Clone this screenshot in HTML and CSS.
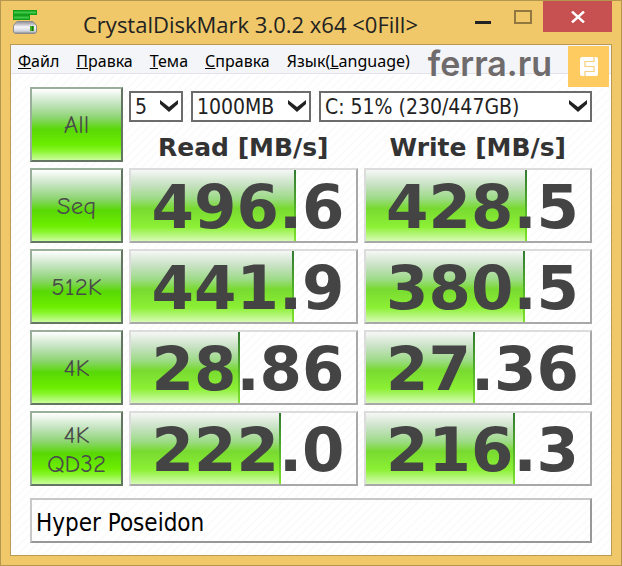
FILE: index.html
```html
<!DOCTYPE html>
<html lang="ru">
<head>
    <meta charset="UTF-8">
    <meta name="viewport" content="width=device-width, initial-scale=1.0">
    <title>CrystalDiskMark 3.0.2 x64 &lt;0Fill&gt;</title>
    <link rel="stylesheet" href="styles.css">
</head>
<body>
    <div class="window">
        <header class="titlebar">
            <svg class="app-icon" width="26" height="26" viewBox="0 0 26 26" aria-hidden="true">
                <defs>
                    <linearGradient id="disk" x1="0" y1="0" x2="0" y2="1">
                        <stop offset="0" stop-color="#8f8f94"/>
                        <stop offset="0.25" stop-color="#c4c4ca"/>
                        <stop offset="0.45" stop-color="#f6f6fa"/>
                        <stop offset="0.8" stop-color="#d4d4de"/>
                        <stop offset="1" stop-color="#85858c"/>
                    </linearGradient>
                </defs>
                <path d="M1 1h24v5h-7v5H1z" fill="#12a01c"/>
                <path d="M2 3.5h22M2 8.5h15" stroke="#3fc848" stroke-width="2"/>
                <path d="M5 12.500h16l3.500 4v6.500l-1.500 1.500H3L1.500 23v-6.500z" fill="url(#disk)" stroke="#8b8b90" stroke-linejoin="round"/>
                <rect x="18" y="17" width="4" height="5" fill="#3faf25"/>
                <path d="M20.500 17v5" stroke="#1d6f1a"/>
            </svg>
            <h1 class="title">CrystalDiskMark 3.0.2 x64 &lt;0Fill&gt;</h1>
            <div class="controls">
                <button class="control" aria-label="Свернуть">
                    <svg width="16" height="32" viewBox="0 0 16 32"><path d="M0 20h16v3H0z" fill="#222"/></svg>
                </button>
                <button class="control" aria-label="Развернуть">
                    <svg width="18" height="32" viewBox="0 0 18 32"><path d="M1 10h16v12H1z" fill="none" stroke="#917840" stroke-width="2"/></svg>
                </button>
                <button class="control close" aria-label="Закрыть">
                    <svg width="14" height="12" viewBox="0 0 14 12"><path d="M1 0.5l12 11M13 0.5l-12 11" stroke="#fff" stroke-width="2.4"/></svg>
                </button>
            </div>
        </header>

        <main class="client">
            <nav class="menu">
                <a href="#"><u>Ф</u>айл</a>
                <a href="#"><u>П</u>равка</a>
                <a href="#"><u>Т</u>ема</a>
                <a href="#"><u>С</u>правка</a>
                <a href="#">Язык(<u>L</u>anguage)</a>
            </nav>

            <!-- Site watermark, lies over the menu -->
            <div class="watermark">
                <span class="wordmark">ferra.ru</span>
                <svg class="badge" width="41" height="41" viewBox="0 0 41 41" aria-hidden="true">
                    <rect width="41" height="41" fill="#fdcb60"/>
                    <rect x="12" y="11" width="18" height="19" rx="2" fill="#fff"/>
                    <path d="M26 11v4.500H17v5h9v5H17V30" fill="none" stroke="#f6cf7c" stroke-width="1.200"/>
                </svg>
            </div>

            <div class="content">
                <table class="results">
                    <colgroup>
                        <col class="col-test">
                        <col>
                        <col>
                    </colgroup>
                    <tr class="options-row">
                        <td rowspan="2"><button class="test">All</button></td>
                        <td colspan="2">
                            <div class="options">
                                <div class="select count">
                                    <select aria-label="Count"><option>5</option></select>
                                    <svg width="18" height="12" viewBox="0 0 18 12"><path d="M0 0l9 7 9-7v4l-9 8-9-8z"/></svg>
                                </div>
                                <div class="select size">
                                    <select aria-label="Size"><option>1000MB</option></select>
                                    <svg width="18" height="12" viewBox="0 0 18 12"><path d="M0 0l9 7 9-7v4l-9 8-9-8z"/></svg>
                                </div>
                                <div class="select drive">
                                    <select aria-label="Drive"><option>C: 51% (230/447GB)</option></select>
                                    <svg width="18" height="12" viewBox="0 0 18 12"><path d="M0 0l9 7 9-7v4l-9 8-9-8z"/></svg>
                                </div>
                            </div>
                        </td>
                    </tr>
                    <tr class="head-row">
                        <th>Read [MB/s]</th>
                        <th>Write [MB/s]</th>
                    </tr>
                    <tr>
                        <td><button class="test">Seq</button></td>
                        <td><div class="score"><div class="fill" style="width: 73.7%"></div><span>496.6</span></div></td>
                        <td><div class="score"><div class="fill" style="width: 71.9%"></div><span>428.5</span></div></td>
                    </tr>
                    <tr>
                        <td><button class="test">512K</button></td>
                        <td><div class="score"><div class="fill" style="width: 72.8%"></div><span>441.9</span></div></td>
                        <td><div class="score"><div class="fill" style="width: 71.2%"></div><span>380.5</span></div></td>
                    </tr>
                    <tr>
                        <td><button class="test">4K</button></td>
                        <td><div class="score"><div class="fill" style="width: 48.7%"></div><span>28.86</span></div></td>
                        <td><div class="score"><div class="fill" style="width: 48.7%"></div><span>27.36</span></div></td>
                    </tr>
                    <tr>
                        <td><button class="test">4K<br>QD32</button></td>
                        <td><div class="score"><div class="fill" style="width: 67%"></div><span>222.0</span></div></td>
                        <td><div class="score"><div class="fill" style="width: 66.5%"></div><span>216.3</span></div></td>
                    </tr>
                </table>
                <input class="comment" type="text" value="Hyper Poseidon" aria-label="Comment">
            </div>
        </main>
    </div>
</body>
</html>
```

FILE: styles.css
```css
* {
    box-sizing: border-box;
}
body {
    margin: 0;
    font-family: "Noto Sans", "Open Sans", sans-serif;
    color: #000;
}
button, select, input {
    font-family: inherit;
    margin: 0;
}
.window {
    min-height: 100vh;
    display: flex;
    flex-direction: column;
    padding: 0 9px 9px;
    background-color: #f0c869;
    border: 1px solid #b5964f;
}

/* Title bar */
.titlebar {
    display: flex;
    height: 43px;
}
.app-icon {
    margin: 8px 0 0 2px;
}
.title {
    flex: 1;
    margin: 0;
    padding-top: 6px;
    font-family: "Open Sans", sans-serif;
    font-size: 22px;
    line-height: 34px;
    font-weight: 400;
    text-align: center;
    white-space: nowrap;
    color: #222;
}
.controls {
    display: flex;
    align-items: flex-start;
}
.control {
    display: flex;
    align-items: center;
    justify-content: center;
    width: 40px;
    height: 31px;
    padding: 0;
    border: none;
    background: none;
}
.close {
    width: 69px;
    background-color: #c75050;
}

/* Client area */
.client {
    position: relative;
    flex: 1;
    border: 1px solid #b99a50;
    background: repeating-linear-gradient(135deg, #fff 0, #fff 4px, #fbfbfb 4px, #fbfbfb 6px);
}
.menu {
    display: flex;
    gap: 17px;
    height: 29px;
    padding-left: 7px;
    font-size: 16px;
    line-height: 32px;
    background-color: #f4f5f8;
    border-bottom: 1px solid #e3e4e8;
}
.menu a {
    color: #000;
    text-decoration: none;
}
.watermark {
    position: absolute;
    top: 1px;
    right: 2px;
    display: flex;
    gap: 16px;
}
.wordmark {
    font-family: Inter, sans-serif;
    font-size: 34px;
    line-height: 36px;
    font-weight: 600;
    color: #6f6b6c;
}
.content {
    padding: 7px 13px 12px;
}

/* Results */
.results {
    width: 100%;
    table-layout: fixed;
    border-collapse: separate;
    border-spacing: 6px;
}
.results td, .results th {
    padding: 0;
    vertical-align: bottom;
}
.col-test {
    width: 93px;
}
.options-row {
    height: 35px;
}
.head-row {
    height: 34px;
}
.results th {
    font-family: "DejaVu Sans", sans-serif;
    font-size: 25px;
    line-height: 28px;
    color: #333;
}
.test {
    display: block;
    width: 100%;
    height: 75px;
    padding: 0;
    border: 2px solid;
    border-color: #9aaf9a #627662 #627662 #9aaf9a;
    background: linear-gradient(#fff 0%, #c6e4c2 20%, #8ed573 40%, #58d805 57%, #6ced00 78%, #85f526 86%, #c9fd9c 100%);
    font-family: "Comic Sans MS", "Comic Neue", Lato, sans-serif;
    font-size: 25px;
    line-height: 29px;
    color: #4a4a4a;
}
.options {
    display: flex;
    gap: 8px;
}
.select {
    display: grid;
    align-items: center;
}
.select > * {
    grid-area: 1 / 1;
}
.select select {
    width: 100%;
    height: 31px;
    padding: 0 4px;
    appearance: none;
    border: 2px solid #6c6c6c;
    border-radius: 0;
    background-color: #fff;
    font-family: "DejaVu Sans Condensed", sans-serif;
    font-size: 21px;
    color: #222;
}
.select svg {
    justify-self: end;
    margin: 0 5px 2px 0;
    fill: #222;
    pointer-events: none;
}
.count {
    width: 54px;
}
.size {
    width: 120px;
}
.drive {
    flex: 1;
}
.score {
    display: grid;
    height: 75px;
    border: 2px solid;
    border-color: #dcdcdc #a8a8a8 #a8a8a8 #dcdcdc;
}
.score > * {
    grid-area: 1 / 1;
}
.fill {
    background:
        linear-gradient(#347a34, #4fae28 50%, #7fe52c) right / 2px 100% no-repeat,
        linear-gradient(#f6f7f6 0%, #c9e2c5 20%, #9ddb87 40%, #78da30 54%, #8cf035 80%, #d6fbb4 100%);
}
.score span {
    justify-self: end;
    padding: 3px 11px 0 0;
    font-family: "DejaVu Sans", sans-serif;
    font-size: 61px;
    line-height: 67px;
    font-weight: 700;
    color: #444;
}
.comment {
    display: block;
    width: calc(100% - 12px);
    height: 45px;
    margin: 6px 6px 0;
    padding: 4px 4px 0;
    border: 2px solid;
    border-color: #c8c8c8 #989898 #989898 #c8c8c8;
    background: none;
    font-family: "DejaVu Sans Condensed", sans-serif;
    font-size: 24px;
    color: #000;
}
```
